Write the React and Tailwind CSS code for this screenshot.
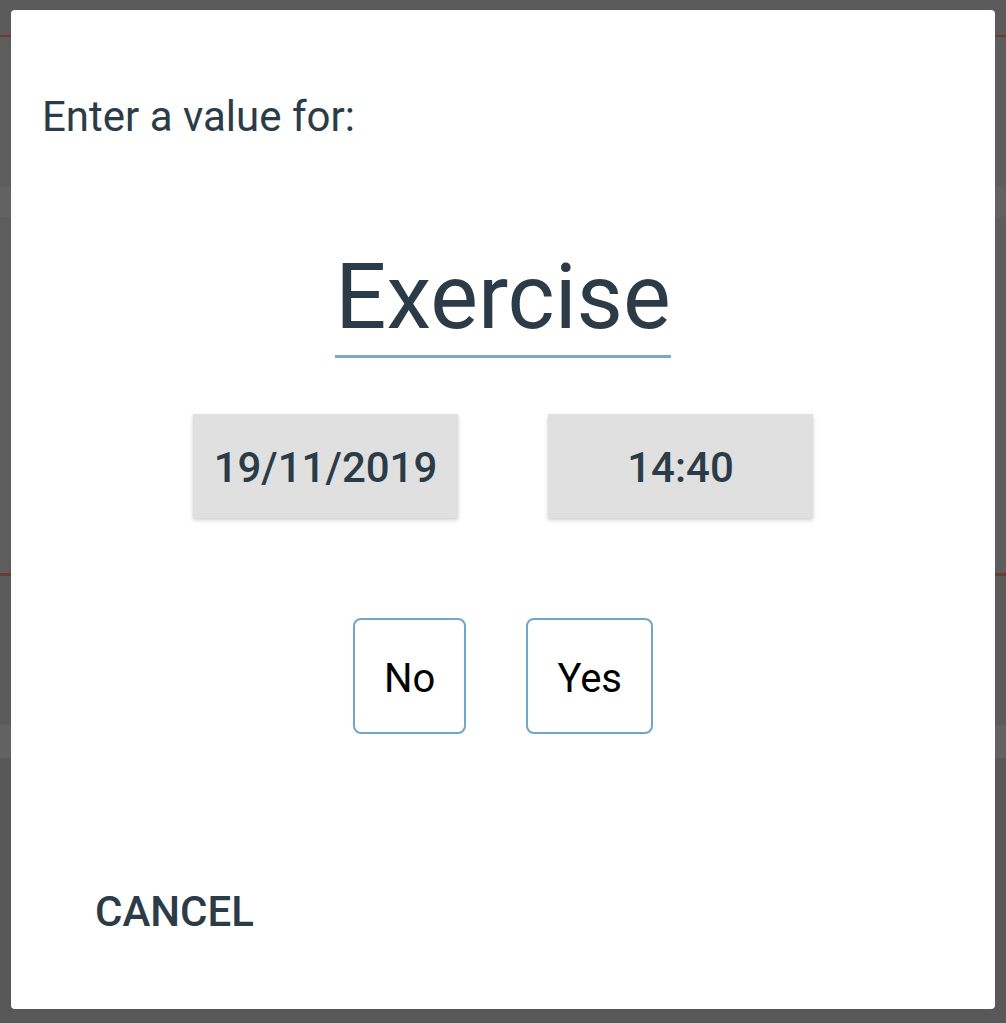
import React from 'react';

function Backdrop() {
  // faint app content behind the modal overlay
  return (
    <div className="absolute inset-0 flex flex-col">
      <div className="h-[35px] bg-[#5b5b5b]"></div>
      <div className="h-[2px] bg-[#6e3a30]"></div>
      <div className="h-[150px] bg-[#5d5d5d]"></div>
      <div className="h-[30px] bg-[#626262]"></div>
      <div className="h-[356px] bg-[#5d5d5d]"></div>
      <div className="h-[3px] bg-[#6e3a30]"></div>
      <div className="h-[149px] bg-[#5b5b5b]"></div>
      <div className="h-[33px] bg-[#626262]"></div>
      <div className="flex-1 bg-[#585858]"></div>
    </div>
  );
}

function ChoiceButton({ label }) {
  return (
    <button className="h-[116px] px-[29px] pt-[6px] border-2 border-[#72a6c8] rounded-lg bg-white text-black text-[40px] leading-none">
      {label}
    </button>
  );
}

function PickerButton({ label }) {
  return (
    <button className="w-[265px] h-[104px] pt-[4px] bg-[#e0e0e0] shadow-[0_2px_4px_rgba(0,0,0,0.2)] text-[#2b3c48] text-[42px] font-medium leading-none">
      {label}
    </button>
  );
}

export default function App() {
  return (
    <div className="relative h-[1023px] w-full overflow-hidden pt-[10px] pl-[11px]" style={{ fontFamily: 'Roboto, "Liberation Sans", sans-serif' }}>
      <Backdrop />
      <div className="relative w-[984px] h-[999px] bg-white rounded-[4px] flex flex-col pt-[85px] pl-[31px] text-[#2b3c48]">
        <p className="text-[42px] leading-[44px]">Enter a value for:</p>

        <div className="flex justify-center pr-[31px] mt-[107px]">
          <div className="inline-block text-[90px] leading-[1.15] pb-[5px] border-b-[3px] border-[#79a9c9]">
            Exercise
          </div>
        </div>

        <div className="flex justify-center gap-[90px] pr-[31px] mt-[56px]">
          <PickerButton label="19/11/2019" />
          <PickerButton label="14:40" />
        </div>

        <div className="flex justify-center gap-[60px] pr-[31px] mt-[100px]">
          <ChoiceButton label="No" />
          <ChoiceButton label="Yes" />
        </div>

        <div className="mt-auto mb-[76px] pl-[53px]">
          <button className="text-[42px] font-medium leading-none text-[#2b3c48]">CANCEL</button>
        </div>
      </div>
    </div>
  );
}
